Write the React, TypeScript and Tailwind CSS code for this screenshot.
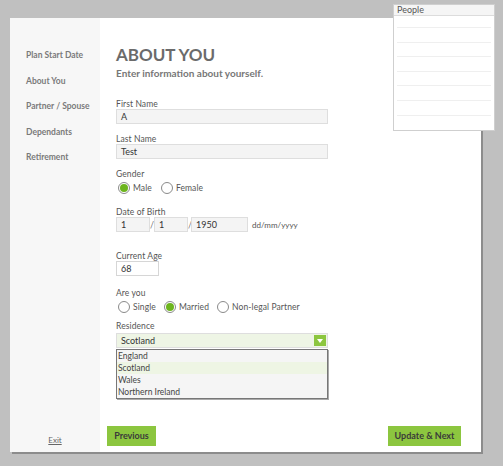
import React from "react";

const font = { fontFamily: 'Lato, "Open Sans", sans-serif' };

function Radio({ label, checked }: { label: string; checked?: boolean }) {
  return (
    <label className="flex items-center gap-[3px]">
      <span className="flex h-[12px] w-[12px] items-center justify-center rounded-full border border-[#8a8a8a] bg-white">
        {checked && <span className="h-[8px] w-[8px] rounded-full bg-[#6db51e]" />}
      </span>
      <span className="text-[8.5px] tracking-[0.1px] text-[#555]">{label}</span>
    </label>
  );
}

function Label({ text }: { text: string }) {
  return <div className="h-[11px] text-[8.5px] leading-[13px] tracking-[0.1px] text-[#555]">{text}</div>;
}

function Field({ label, value }: { label: string; value: string }) {
  return (
    <div>
      <Label text={label} />
      <div className="flex h-[15px] w-[212px] items-center border border-[#dedede] bg-[#f4f4f4] px-[4px] text-[9px] text-[#333]">
        {value}
      </div>
    </div>
  );
}

export default function App() {
  const nav = ["Plan Start Date", "About You", "Partner / Spouse", "Dependants", "Retirement"];
  const people = [0, 1, 2, 3, 4, 5, 6];

  return (
    <div className="relative h-[466px] w-[503px] overflow-hidden bg-[#c0c0c0] pl-[10px] pt-[18px]" style={font}>
      {/* main card */}
      <div className="flex h-[434px] w-[471px] bg-white shadow-[2px_2px_0_#8c8c8c]">
        <div className="flex w-[90px] flex-col bg-[#f7f7f7] pb-[6px] pl-[16px] pt-[25px]">
          {nav.map((n) => (
            <div key={n} className="flex h-[25.5px] items-center text-[8.5px] font-bold text-[#7a7a7a]">
              {n}
            </div>
          ))}
          <div className="mt-auto pr-[16px] text-center text-[8px] leading-[11px] text-[#666] underline">Exit</div>
        </div>

        <div className="flex flex-1 flex-col pb-[6px]">
          <div className="pl-[16px] pt-[27px]">
            <div className="text-[17px] font-bold leading-[20px] text-[#6b6b6b]">ABOUT YOU</div>
            <div className="mt-[2px] text-[10px] font-bold leading-[12px] text-[#777]">
              Enter information about yourself.
            </div>

            <div className="mt-[19px]">
              <Field label="First Name" value="A" />
            </div>
            <div className="mt-[9px]">
              <Field label="Last Name" value="Test" />
            </div>

            <div className="mt-[9px]">
              <Label text="Gender" />
            </div>
            <div className="mt-[2px] flex h-[14px] items-center gap-[9px] pl-[2px]">
              <Radio label="Male" checked />
              <Radio label="Female" />
            </div>

            <div className="mt-[11px]">
              <Label text="Date of Birth" />
            </div>
            <div className="flex items-center text-[9px] text-[#333]">
              <div className="flex h-[15px] w-[34px] items-center border border-[#dedede] bg-[#f4f4f4] px-[4px]">1</div>
              <span className="w-[4px] text-[#777]">/</span>
              <div className="flex h-[15px] w-[34px] items-center border border-[#dedede] bg-[#f4f4f4] px-[4px]">1</div>
              <span className="w-[3px] text-[#777]">/</span>
              <div className="flex h-[15px] w-[57px] items-center border border-[#dedede] bg-[#f4f4f4] px-[4px]">1950</div>
              <span className="ml-[4px] text-[8px] text-[#555]">dd/mm/yyyy</span>
            </div>

            <div className="mt-[18px]">
              <Label text="Current Age" />
            </div>
            <div className="flex h-[15px] w-[43px] items-center border border-[#d6d6d6] bg-white px-[4px] text-[9px] text-[#333]">
              68
            </div>

            <div className="mt-[11px]">
              <Label text="Are you" />
            </div>
            <div className="mt-[2px] flex h-[14px] items-center gap-[8px] pl-[2px]">
              <Radio label="Single" />
              <Radio label="Married" checked />
              <Radio label="Non-legal Partner" />
            </div>

            <div className="mt-[6px]">
              <Label text="Residence" />
            </div>
            <div className="relative mt-[2px] w-[212px]">
              <div className="flex h-[15px] items-center justify-between border border-[#dedede] bg-[#eef5e5] pl-[4px] pr-[1px] text-[9px] text-[#333]">
                <span>Scotland</span>
                <span className="flex h-[11px] w-[12px] items-center justify-center bg-[#8cc63f]">
                  <svg width="6" height="4" viewBox="0 0 6 4">
                    <path d="M0 0 L6 0 L3 4 Z" fill="#fff" />
                  </svg>
                </span>
              </div>
              {/* open list */}
              <div className="absolute left-0 top-[16px] z-10 w-[212px] border border-[#777] bg-[#f5f5f5] text-[8.5px] leading-[12px] text-[#444] shadow-[1px_1px_0_#aaa]">
                <div className="px-[1px]">England</div>
                <div className="bg-[#eef5e4] px-[1px]">Scotland</div>
                <div className="px-[1px]">Wales</div>
                <div className="px-[1px]">Northern Ireland</div>
              </div>
            </div>
          </div>

          <div className="mt-auto flex justify-between pl-[7px] pr-[20px]">
            <button className="h-[20px] w-[49px] bg-[#8cc63f] text-[9px] font-bold text-[#3a3a3a]">Previous</button>
            <button className="h-[20px] w-[73px] bg-[#8cc63f] text-[9px] font-bold text-[#3a3a3a]">Update &amp; Next</button>
          </div>
        </div>
      </div>

      {/* people panel */}
      <div className="absolute left-[393px] top-[4px] h-[127px] w-[102px] border border-[#cfcfcf] bg-white">
        <div className="h-[11px] border-b border-[#dcdcdc] bg-[#f5f5f5] pl-[3px] text-[9px] leading-[10px] text-[#555]">People</div>
        <div className="px-[3px]">
          <div className="h-[12px] border-b border-[#efefef]" />
          {people.slice(1).map((p) => (
            <div key={p} className="h-[14.6px] border-b border-[#efefef]" />
          ))}
        </div>
      </div>
    </div>
  );
}
